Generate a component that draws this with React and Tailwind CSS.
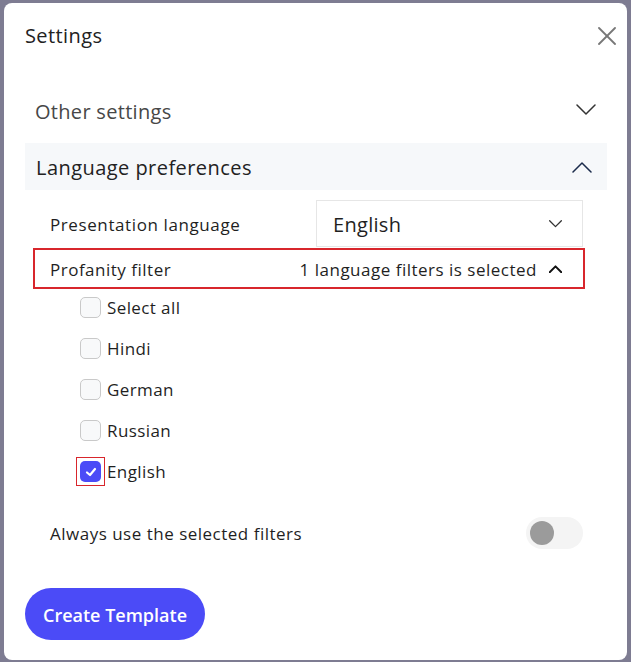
import React from 'react';

const languages = [
  { label: 'Select all', checked: false },
  { label: 'Hindi', checked: false },
  { label: 'German', checked: false },
  { label: 'Russian', checked: false },
  { label: 'English', checked: true },
];

function Chevron({ up = false, className = '', strokeWidth = 1.5 }) {
  return (
    <svg viewBox="0 0 20 12" fill="none" stroke="currentColor" strokeWidth={strokeWidth} strokeLinecap="round" strokeLinejoin="round" className={className}>
      {up ? <polyline points="1,11 10,2 19,11" /> : <polyline points="1,1 10,10 19,1" />}
    </svg>
  );
}

function LangCheckbox({ item }) {
  return (
    <div className="flex h-[41px] items-center pl-[55px]">
      {item.checked ? (
        <span className="-m-[4px] border border-[#d8262c] p-[3px]">
          <span className="flex h-[21px] w-[21px] items-center justify-center rounded-[5px] bg-[#4b4bf7]">
            <svg viewBox="0 0 12 12" className="h-[12px] w-[12px]" fill="none" stroke="white" strokeWidth="2.2" strokeLinecap="round" strokeLinejoin="round">
              <polyline points="2,6.5 5,9 10,3" />
            </svg>
          </span>
        </span>
      ) : (
        <span className="h-[21px] w-[21px] rounded-[5px] border border-[#c9c9c9] bg-[#f8f9fa]" />
      )}
      <span className="ml-[6px] text-[17px] leading-[21px] tracking-[0.4px] text-[#1f1f1f]">{item.label}</span>
    </div>
  );
}

export default function App() {
  return (
    <div className="h-[662px] w-[631px] overflow-hidden bg-[#7e7c92] pl-[4px] pt-[3px] font-['Open_Sans',sans-serif]">
      <div className="relative h-[657px] w-[623px] rounded-lg bg-white">
        {/* Header */}
        <div className="flex items-center justify-between pl-[21px] pr-[11px] pt-[20px]">
          <h2 className="pt-[1px] text-[20px] leading-[24px] font-medium tracking-[0.4px] text-[#222]">Settings</h2>
          <svg viewBox="0 0 18 18" className="h-[18px] w-[18px] text-[#777]" fill="none" stroke="currentColor" strokeWidth="1.8" strokeLinecap="round">
            <line x1="1" y1="1" x2="17" y2="17" />
            <line x1="17" y1="1" x2="1" y2="17" />
          </svg>
        </div>

        <div className="ml-[21px] w-[582px]">
          {/* Other settings */}
          <div className="mt-[39px] flex h-[46px] items-center justify-between pl-[10px] pr-[11px]">
            <span className="pt-[3px] text-[20px] tracking-[0.3px] text-[#474747]">Other settings</span>
            <Chevron className="h-[12px] w-[20px] text-[#333]" />
          </div>

          {/* Language preferences */}
          <div className="mt-[10px] flex h-[47px] items-center justify-between bg-[#f6f8fa] pl-[11px] pr-[15px]">
            <span className="pt-[3px] text-[20px] tracking-[0.45px] text-[#222]">Language preferences</span>
            <Chevron up className="h-[12px] w-[20px] text-[#1b2b4b]" />
          </div>

          {/* Presentation language */}
          <div className="mt-[10px] flex h-[47px] items-center">
            <span className="w-[291px] pl-[25px] pt-[2px] text-[17px] tracking-[0.6px] text-[#1f1f1f]">Presentation language</span>
            <div className="flex h-full w-[267px] items-center justify-between border border-[#e6e6e6] pl-[16px] pr-[20px]">
              <span className="pt-[2px] text-[20px] tracking-[0.3px] text-[#1f1f1f]">English</span>
              <Chevron className="h-[8px] w-[13px] text-[#333]" strokeWidth={2} />
            </div>
          </div>

          {/* Profanity filter */}
          <div className="ml-[8px] mt-[1px] flex h-[41px] w-[552px] items-center justify-between border-2 border-[#d8262c] pl-[15px] pr-[21px]">
            <span className="pt-[3px] text-[17px] tracking-[0.5px] text-[#1f1f1f]">Profanity filter</span>
            <div className="flex items-center gap-[12px]">
              <span className="pt-[3px] text-[17px] tracking-[0.5px] text-[#1f1f1f]">1 language filters is selected</span>
              <Chevron up className="h-[8px] w-[13px] text-[#111]" strokeWidth={3} />
            </div>
          </div>

          {/* Language list */}
          <div className="-mt-[2px]">
            {languages.map((item) => (
              <LangCheckbox key={item.label} item={item} />
            ))}
          </div>

          {/* Always use */}
          <div className="mt-[18px] flex h-[46px] items-center justify-between pl-[25px] pr-[24px]">
            <span className="pt-[2px] text-[17px] tracking-[0.5px] text-[#1f1f1f]">Always use the selected filters</span>
            <div className="flex h-[32px] w-[57px] items-center rounded-full bg-[#f4f4f4] pl-[4px]">
              <span className="h-[24px] w-[24px] rounded-full bg-[#9b9b9b]" />
            </div>
          </div>

          {/* Button */}
          <button className="mt-[32px] h-[52px] w-[180px] rounded-full bg-[#4b4bf7] pt-[2px] text-[18px] font-semibold text-white">
            Create Template
          </button>
        </div>
      </div>
    </div>
  );
}
